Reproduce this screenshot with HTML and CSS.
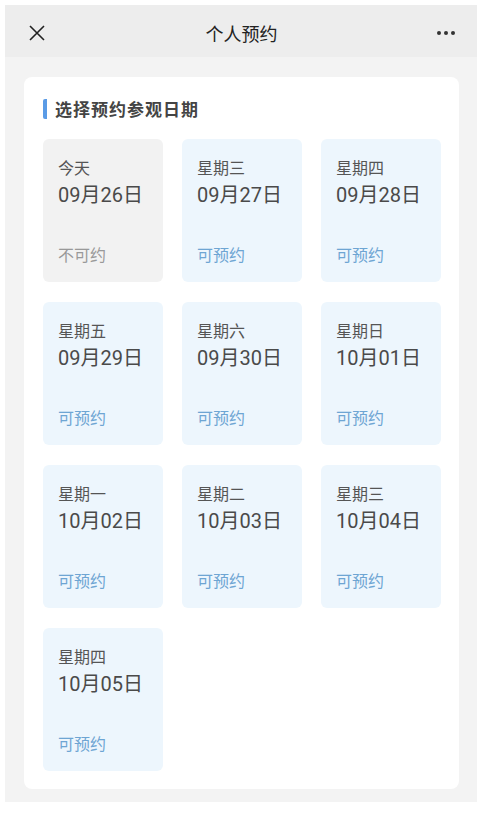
FILE: index.html
```html
<!DOCTYPE html>
<html>
<head>
  <meta charset="utf-8">
  <title>个人预约</title>
  <link rel="stylesheet" href="styles.css">
</head>
<body>
  <div class="page">
    <div class="topbar">
      <svg class="close" width="18" height="18" viewBox="0 0 18 18">
        <path d="M2 2 L16 16 M16 2 L2 16" stroke="#222" stroke-width="1.6" fill="none" />
      </svg>
      <div class="title">个人预约</div>
      <div class="more"><span></span><span></span><span></span></div>
    </div>

    <div class="content">
      <div class="card">
        <h2 class="section-title">选择预约参观日期</h2>
        <div class="dates">
          <div class="day off">
            <div class="week">今天</div>
            <div class="date">09月26日</div>
            <div class="status">不可约</div>
          </div>
          <div class="day">
            <div class="week">星期三</div>
            <div class="date">09月27日</div>
            <div class="status">可预约</div>
          </div>
          <div class="day">
            <div class="week">星期四</div>
            <div class="date">09月28日</div>
            <div class="status">可预约</div>
          </div>
          <div class="day">
            <div class="week">星期五</div>
            <div class="date">09月29日</div>
            <div class="status">可预约</div>
          </div>
          <div class="day">
            <div class="week">星期六</div>
            <div class="date">09月30日</div>
            <div class="status">可预约</div>
          </div>
          <div class="day">
            <div class="week">星期日</div>
            <div class="date">10月01日</div>
            <div class="status">可预约</div>
          </div>
          <div class="day">
            <div class="week">星期一</div>
            <div class="date">10月02日</div>
            <div class="status">可预约</div>
          </div>
          <div class="day">
            <div class="week">星期二</div>
            <div class="date">10月03日</div>
            <div class="status">可预约</div>
          </div>
          <div class="day">
            <div class="week">星期三</div>
            <div class="date">10月04日</div>
            <div class="status">可预约</div>
          </div>
          <div class="day">
            <div class="week">星期四</div>
            <div class="date">10月05日</div>
            <div class="status">可预约</div>
          </div>
        </div>
      </div>
    </div>
  </div>
</body>
</html>
```

FILE: styles.css
```css
body {
  margin: 0;
  padding: 5px 7px 15px 5px;
  background-color: #ffffff;
  font-family: "Noto Sans CJK SC", "Noto Sans", sans-serif;
  color: #333;
}

.page {
  height: 797px;
  background-color: #f3f3f3;
  display: flex;
  flex-direction: column;
}

.topbar {
  height: 52px;
  padding: 4px 22px 0 23px;
  box-sizing: border-box;
  background-color: #ededed;
  display: flex;
  align-items: center;
  justify-content: space-between;
}

.close {
  display: block;
}

.title {
  font-size: 18px;
  color: #222;
}

.more {
  display: flex;
  gap: 3px;
  width: 18px;
}

.more span {
  width: 4px;
  height: 4px;
  border-radius: 50%;
  background-color: #333;
}

.content {
  padding: 20px 18px 0 19px;
}

.card {
  background-color: #ffffff;
  border-radius: 8px;
  padding: 22px 18px 18px 19px;
}

.section-title {
  margin: 0 0 20px 0;
  height: 20px;
  line-height: 20px;
  font-size: 17px;
  font-weight: 600;
  letter-spacing: 1px;
  color: #444;
  border-left: 4px solid #5a9be6;
  border-radius: 2px;
  padding-left: 8px;
}

.dates {
  display: grid;
  grid-template-columns: repeat(3, 1fr);
  column-gap: 19px;
  row-gap: 20px;
}

.day {
  height: 143px;
  box-sizing: border-box;
  padding: 18px 8px 18px 15px;
  border-radius: 6px;
  background-color: #edf6fd;
  display: flex;
  flex-direction: column;
}

.day.off {
  background-color: #f2f2f2;
}

.week {
  font-size: 16px;
  line-height: 20px;
  color: #555;
}

.date {
  margin-top: 4px;
  font-family: Roboto, "Noto Sans CJK SC", sans-serif;
  font-size: 20px;
  line-height: 28px;
  color: #4a4a4a;
}

.status {
  margin-top: auto;
  font-size: 16px;
  line-height: 20px;
  color: #6ea5d3;
}

.day.off .status {
  color: #999;
}
```
